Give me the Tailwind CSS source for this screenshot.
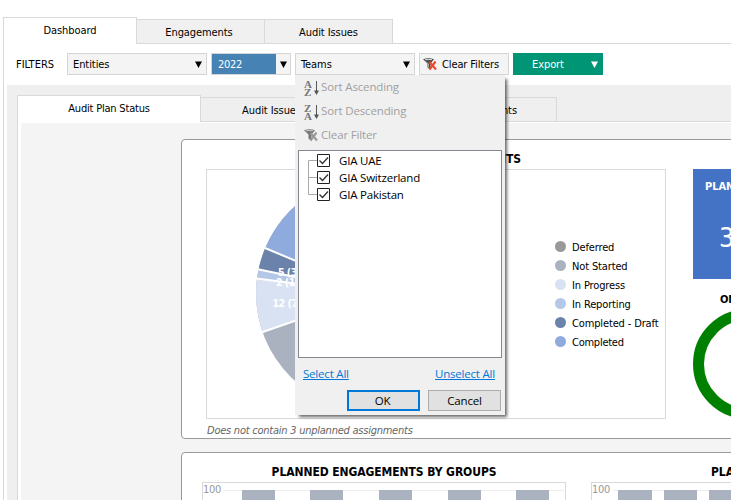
<!DOCTYPE html>
<html lang="en">
<head>
<meta charset="utf-8">
<title>Audit Dashboard</title>
<script src="https://cdn.jsdelivr.net/npm/@tailwindcss/browser@4"></script>
</head>
<body class="bg-white">
<div class="relative flex h-[500px] w-[731px] flex-col overflow-hidden bg-white pt-[17px] pl-[3px] font-['DejaVu_Sans_Condensed','Noto_Sans',sans-serif] text-[11px] leading-[14px] tracking-[-0.08px] whitespace-nowrap text-black">
  <!-- main tabs -->
  <nav class="flex h-[27px] shrink-0 items-end">
    <div class="h-[27px] w-[134px] border-t border-r border-l border-[#d9d9d9] bg-white pt-[6px] text-center">Dashboard</div>
    <div class="h-[25px] w-[128px] border-t border-r border-b border-[#d9d9d9] bg-[#f0f0f0] pt-[6px] pr-[3px] text-center">Engagements</div>
    <div class="h-[25px] w-[128px] border-t border-r border-b border-[#d9d9d9] bg-[#f0f0f0] pt-[6px] text-center">Audit Issues</div>
    <div class="h-px flex-1 bg-[#d9d9d9]"></div>
  </nav>
  <div class="flex min-h-0 flex-1 flex-col border-l border-[#d9d9d9] pt-[9px]">
    <!-- filters -->
    <div class="flex h-[22px] shrink-0 items-center pl-[12px]">
      <span class="w-[51px] pt-px tracking-normal">FILTERS</span>
      <div class="flex h-[22px] w-[140px] items-center justify-between border border-[#d5d5d5] bg-[#f4f4f4] pr-[4px] pl-[5px]"><span class="pt-px">Entities</span><svg width="7" height="7"><path d="M0 .5h7L3.5 7z"/></svg></div>
      <div class="ml-[4px] flex h-[22px] w-[80px] items-center border border-[#d5d5d5] bg-[#f4f4f4]"><span class="flex h-full w-[64px] items-center bg-[#4682b4] pt-px pl-[6px] tracking-[-0.3px] text-white">2022</span><svg class="ml-[4px]" width="7" height="7"><path d="M0 .5h7L3.5 7z"/></svg></div>
      <div class="ml-[4px] flex h-[22px] w-[120px] items-center justify-between border border-[#d5d5d5] bg-[#f4f4f4] pr-[4px] pl-[5px]"><span class="pt-px">Teams</span><svg width="7" height="7"><path d="M0 .5h7L3.5 7z"/></svg></div>
      <div class="ml-[4px] flex h-[22px] w-[90px] items-center border border-[#d5d5d5] bg-[#f4f4f4] pl-[3px]">
        <svg width="15" height="13" viewBox="0 0 15 13"><path d="M0 1.2Q5.5-.5 11 1.2L7.5 5.5V12L4.5 9.5V5.5z" fill="#4a4a4a"/><path d="M2 1.6h7" stroke="#ddd"/><path d="M3 3.5l2.5 2.5v3.5" stroke="#aaa" fill="none"/><path d="M6.5 4l6.5 7.5M12.5 3.5l-6 8" stroke="#f0482c" stroke-width="2.1"/></svg>
        <span class="ml-[4px] pt-px tracking-[-0.12px]">Clear Filters</span></div>
      <div class="ml-[4px] flex h-[22px] w-[90px] items-center bg-[#009575] text-white"><span class="w-[78px] pt-px pl-[19px]">Export</span><svg width="7" height="7"><path d="M0 .5h7L3.5 7z" fill="#fff"/></svg></div>
    </div>
    <!-- plan area -->
    <div class="mt-[10px] ml-[3px] flex min-h-0 flex-1 flex-col bg-[#efefef] pt-[10px] pl-[10px]">
      <div class="flex h-[27px] shrink-0 items-end">
        <div class="h-[27px] w-[184px] border-t border-r border-l border-[#d9d9d9] bg-white pt-[6px] text-center tracking-[-0.2px]">Audit Plan Status</div>
        <div class="h-[25px] w-[140px] border-t border-r border-b border-[#d9d9d9] pt-[6px] pl-[2px] text-center">Audit Issues</div>
        <div class="h-[25px] w-[216px] border-t border-r border-b border-[#d9d9d9] pt-[6px] text-right"><span class="mr-[39px]">Planned Engagements</span></div>
        <div class="h-px flex-1 bg-[#d9d9d9]"></div>
      </div>
      <div class="min-h-0 flex-1 border-l border-[#d9d9d9] bg-white pt-[1px] pl-[3px]">
        <div class="flex h-full flex-col gap-[13px] bg-[#f4f4f4] pt-[16px] pl-[160px]">
          <section class="flex h-[300px] w-[600px] shrink-0 rounded-[4px] border border-[#999] bg-white pl-[24px]">
            <div class="w-[460px] shrink-0">
              <h2 class="flex h-[29px] items-center justify-center pt-[9px] pl-[18px] text-[12px] font-bold">PLANNED ENGAGEMENTS</h2>
              <div class="flex h-[250px] justify-between border border-[#d9d9d9]">
                <svg width="290" height="248" viewBox="207 170 290 248">
                  <circle cx="373.6" cy="293.5" r="117.6" fill="#aab2bf"/>
                  <path d="M373.6 293.5L262.5 332A117.6 117.6 0 0 1 257 278.5Z" fill="#d9e2f3"/>
                  <path d="M373.6 293.5L257 278.5A117.6 117.6 0 0 1 258.6 269.3Z" fill="#b4c7e7"/>
                  <path d="M373.6 293.5L258.6 269.3A117.6 117.6 0 0 1 265.5 247.5Z" fill="#6b82ab"/>
                  <path d="M373.6 293.5L265.5 247.5A117.6 117.6 0 0 1 373.6 175.9Z" fill="#8faadc"/>
                  <path d="M373.6 293.5L262 332.3M373.6 293.5L256.5 278.5M373.6 293.5L258 269.2M373.6 293.5L265 248M373.6 293.5V175" stroke="#fff" stroke-width="2"/>
                  <g fill="#fff" font-size="10.5" font-weight="700" letter-spacing="-.5"><text x="278" y="275.5">5 (3%)</text><text x="276" y="285.5">2 (1%)</text><text x="272.5" y="306.5">12 (7%)</text></g>
                </svg>
                <ul class="w-[110px] shrink-0 pt-[67px] leading-[19px] tracking-[-0.14px]">
                  <li class="flex h-[19px] items-center gap-[6px]"><i class="size-[11px] rounded-full bg-[#999]"></i><span class="pt-px">Deferred</span></li>
                  <li class="flex h-[19px] items-center gap-[6px]"><i class="size-[11px] rounded-full bg-[#aab2bf]"></i><span class="pt-px">Not Started</span></li>
                  <li class="flex h-[19px] items-center gap-[6px]"><i class="size-[11px] rounded-full bg-[#d9e2f3]"></i><span class="pt-px">In Progress</span></li>
                  <li class="flex h-[19px] items-center gap-[6px]"><i class="size-[11px] rounded-full bg-[#b4c7e7]"></i><span class="pt-px">In Reporting</span></li>
                  <li class="flex h-[19px] items-center gap-[6px]"><i class="size-[11px] rounded-full bg-[#6b82ab]"></i><span class="pt-px">Completed - Draft</span></li>
                  <li class="flex h-[19px] items-center gap-[6px]"><i class="size-[11px] rounded-full bg-[#8faadc]"></i><span class="pt-px tracking-[-0.25px]">Completed</span></li>
                </ul>
              </div>
              <p class="mt-[5px] pl-px tracking-[-0.24px] text-[#666] italic">Does not contain 3 unplanned assignments</p>
            </div>
            <div class="ml-[27px] w-[110px] shrink-0 pt-[29px]">
              <div class="h-[110px] bg-[#4472c4] pt-[11px] pl-[12px] text-white"><b class="block">PLANNED</b><span class="mt-[27px] ml-[14px] block text-[27px] leading-[34px]">3</span></div>
              <b class="mt-[14px] block pl-[27px]">ON TRACK</b>
              <svg class="mt-[2px]" width="110" height="110"><circle cx="55" cy="55" r="49.5" fill="none" stroke="#008000" stroke-width="11"/></svg>
            </div>
          </section>
          <section class="flex h-[100px] w-[600px] shrink-0 rounded-[4px] border border-[#999] bg-white pl-[20px]">
            <div class="w-[364px] shrink-0">
              <h2 class="flex h-[29px] items-center justify-center pt-[9px] text-[12px] font-bold">PLANNED ENGAGEMENTS BY GROUPS</h2>
              <div class="flex h-[80px] border border-[#d9d9d9] text-[#999]">
                <span class="w-[21px] shrink-0 tracking-[-0.3px]">100</span>
                <svg class="shrink-0" width="340" height="70" viewBox="224 483 340 70"><path d="M224 490.5h341" stroke="#eee"/><path d="M242 490h33v60h-33zM310 490h33v60h-33zM379 490h33v60h-33zM448 490h33v60h-33zM516 490h33v60h-33z" fill="#aab2bf"/></svg>
              </div>
            </div>
            <div class="ml-[25px] w-[364px] shrink-0">
              <h2 class="flex h-[29px] items-center pt-[9px] pl-[120px] text-[12px] font-bold">PLANNED</h2>
              <div class="flex h-[80px] border border-[#d9d9d9] text-[#999]">
                <span class="w-[21px] shrink-0 tracking-[-0.3px]">100</span>
                <svg class="shrink-0" width="340" height="70" viewBox="613 483 340 70"><path d="M613 490.5h341" stroke="#eee"/><path d="M618 490h34v60h-34zM664 490h33v60h-33zM709 490h33v60h-33z" fill="#aab2bf"/></svg>
              </div>
            </div>
          </section>
        </div>
      </div>
    </div>
  </div>
  <!-- teams drop-down -->
  <div class="absolute top-[75px] left-[295px] flex h-[340px] w-[210px] flex-col bg-[#f0f0f0] px-[3px] font-['Open_Sans',sans-serif] text-[11.5px] tracking-[-0.2px] shadow-[3px_3px_3px_-1px_rgba(0,0,0,0.6)]">
    <div class="h-[75px] shrink-0 pl-[6px] tracking-[-0.15px] text-[#a0a0a0]">
      <div class="flex h-[24px] items-center gap-[2px]">
        <svg class="mt-[2px]" width="15" height="16" viewBox="0 0 15 16"><g fill="#777" font-family="Liberation Serif, serif" font-size="11" font-weight="700"><text x="0" y="7.5">A</text><text x="0" y="15.5">Z</text></g><path d="M12.5 1v11" stroke="#555"/><path d="M10 10.5h5L12.5 15z" fill="#555"/></svg>Sort Ascending</div>
      <div class="flex h-[24px] items-center gap-[2px]">
        <svg class="mt-[2px]" width="15" height="16" viewBox="0 0 15 16"><g fill="#777" font-family="Liberation Serif, serif" font-size="11" font-weight="700"><text x="0" y="7.5">Z</text><text x="0" y="15.5">A</text></g><path d="M12.5 1v11" stroke="#555"/><path d="M10 10.5h5L12.5 15z" fill="#555"/></svg>Sort Descending</div>
      <div class="flex h-[24px] items-center gap-[2px]">
        <svg class="mt-[1px]" width="15" height="13" viewBox="0 0 15 13"><path d="M0 1.2Q5.5-.5 11 1.2L7.5 5.5V12L4.5 9.5V5.5z" fill="#777"/><path d="M2 1.6h7" stroke="#ccc"/><path d="M6.5 4l6.5 7.5M12.5 3.5l-6 8" stroke="#999" stroke-width="2.1"/></svg>Clear Filter</div>
    </div>
    <div class="flex h-[208px] shrink-0 border border-[#828790] bg-white pt-[2px] pl-[9px]">
      <svg width="23" height="54" viewBox="308 153 23 54" fill="none"><path d="M317 160.500H308.500V194.500H317M308.500 177.500H317" stroke="#aaa"/><g fill="#fff" stroke="#222"><path d="M317.500 154.500h12v12h-12zM317.500 171.500h12v12h-12zM317.500 188.500h12v12h-12z"/></g><path d="M319.500 160.500l3 3 5.500-6M319.500 177.500l3 3 5.500-6M319.500 194.500l3 3 5.500-6" stroke="#333" stroke-width="1.300"/></svg>
      <div class="-mt-px pl-[8px] leading-[17px]"><div>GIA UAE</div><div>GIA Switzerland</div><div>GIA Pakistan</div></div>
    </div>
    <div class="flex h-[32px] items-center justify-between pr-[7px] pl-[5px] text-[#0078d7] underline"><span>Select All</span><span>Unselect All</span></div>
    <div class="flex h-[21px] justify-end gap-[8px] pr-px text-center leading-[17px]">
      <div class="h-[21px] w-[73px] border-2 border-[#0078d7] bg-[#e1e1e1] pr-[2px]">OK</div>
      <div class="h-[21px] w-[73px] border border-[#adadad] bg-[#e1e1e1] pt-px">Cancel</div>
    </div>
  </div>
</div>
</body>
</html>
